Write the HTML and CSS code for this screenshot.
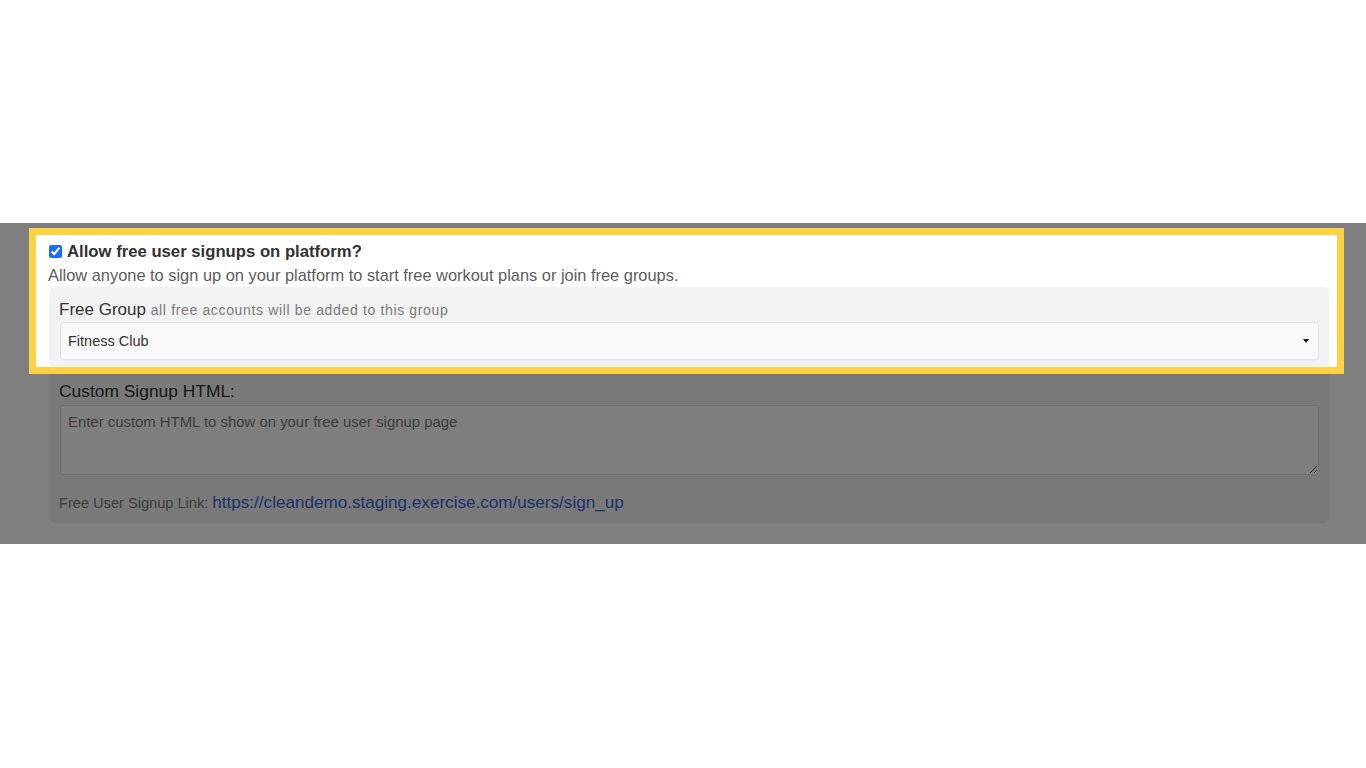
FILE: index.html
```html
<!DOCTYPE html>
<html lang="en">
<head>
<meta charset="utf-8">
<title>Free signups</title>
<link rel="stylesheet" href="styles.css">
</head>
<body>
<div class="frame">
  <div class="page">
    <label class="check-row">
      <input type="checkbox" class="check" checked>
      <span class="check-title">Allow free user signups on platform?</span>
    </label>
    <p class="desc">Allow anyone to sign up on your platform to start free workout plans or join free groups.</p>
    <div class="well">
      <div class="field-label">Free Group <span class="hint">all free accounts will be added to this group</span></div>
      <div class="select-wrap">
        <select class="select">
          <option>Fitness Club</option>
        </select>
      </div>
      <div class="field-label spaced">Custom Signup HTML:</div>
      <textarea class="textarea" placeholder="Enter custom HTML to show on your free user signup page"></textarea>
      <div class="link-row">Free User Signup Link: <a class="link" href="#">https://cleandemo.staging.exercise.com/users/sign_up</a></div>
    </div>
  </div>
  <div class="spotlight"></div>
</div>
</body>
</html>
```

FILE: styles.css
```css
html, body {
  margin: 0;
  padding: 0;
  background: #ffffff;
}

body {
  font-family: "Liberation Sans", Arial, Helvetica, sans-serif;
  color: #333333;
}

.frame {
  position: relative;
  margin-top: 223px;
  height: 321px;
  overflow: hidden;
  background: #ffffff;
}

.page {
  padding: 19px 37px 0 48px;
}

.check-row {
  display: flex;
  align-items: center;
  height: 20px;
  cursor: pointer;
}

.check {
  width: 13px;
  height: 13px;
  margin: 0 5px 2px 1px;
  accent-color: #1b6ef3;
}

.check-title {
  font-size: 16.7px;
  font-weight: bold;
  color: #333333;
  line-height: 20px;
}

.desc {
  margin: 2px 0 0;
  font-size: 16.4px;
  line-height: 22px;
  color: #5c5c5c;
}

.well {
  margin-top: 1px;
  margin-left: 1px;
  background: #f2f2f2;
  border-radius: 5px;
  padding: 11px 10px 9px 11px;
}

.field-label {
  font-size: 17px;
  line-height: 24px;
  color: #333333;
  margin-left: -1px;
}

.field-label.spaced {
  margin-top: 19px;
  font-size: 17.4px;
}

.hint {
  font-size: 14px;
  letter-spacing: 0.65px;
  color: #7a7a7a;
}

.select-wrap {
  position: relative;
}

.select-wrap::after {
  content: "";
  position: absolute;
  right: 10px;
  top: 17px;
  border-left: 3.5px solid transparent;
  border-right: 3.5px solid transparent;
  border-top: 4px solid #111111;
  pointer-events: none;
}

.select {
  display: block;
  width: 100%;
  height: 38px;
  box-sizing: border-box;
  appearance: none;
  -webkit-appearance: none;
  background: #f9f9f9;
  border: 1px solid #e3e3e3;
  border-radius: 4px;
  padding: 0 7px;
  font-family: "Liberation Sans", Arial, Helvetica, sans-serif;
  font-size: 14.5px;
  color: #333333;
  box-shadow: 0 1px 1px rgba(0, 0, 0, 0.02);
}

.textarea {
  display: block;
  width: 100%;
  height: 70px;
  box-sizing: border-box;
  margin-top: 2px;
  background: #fdfdfd;
  border: 1px solid #e3e3e3;
  border-radius: 3px;
  padding: 8px 7px;
  font-family: "Liberation Sans", Arial, Helvetica, sans-serif;
  font-size: 14.9px;
  color: #333333;
}

.textarea::placeholder {
  color: #7a7a7a;
}

.link-row {
  margin-top: 17px;
  margin-left: -1px;
  font-size: 14.6px;
  line-height: 22px;
  color: #7a7a7a;
}

.link {
  font-size: 17.1px;
  color: #3566d6;
  text-decoration: none;
}

.spotlight {
  position: absolute;
  left: 29px;
  top: 5px;
  width: 1315px;
  height: 146px;
  box-sizing: border-box;
  border: 7px solid #fdd244;
  box-shadow: 0 0 0 2000px rgba(0, 0, 0, 0.5);
  pointer-events: none;
}
```
